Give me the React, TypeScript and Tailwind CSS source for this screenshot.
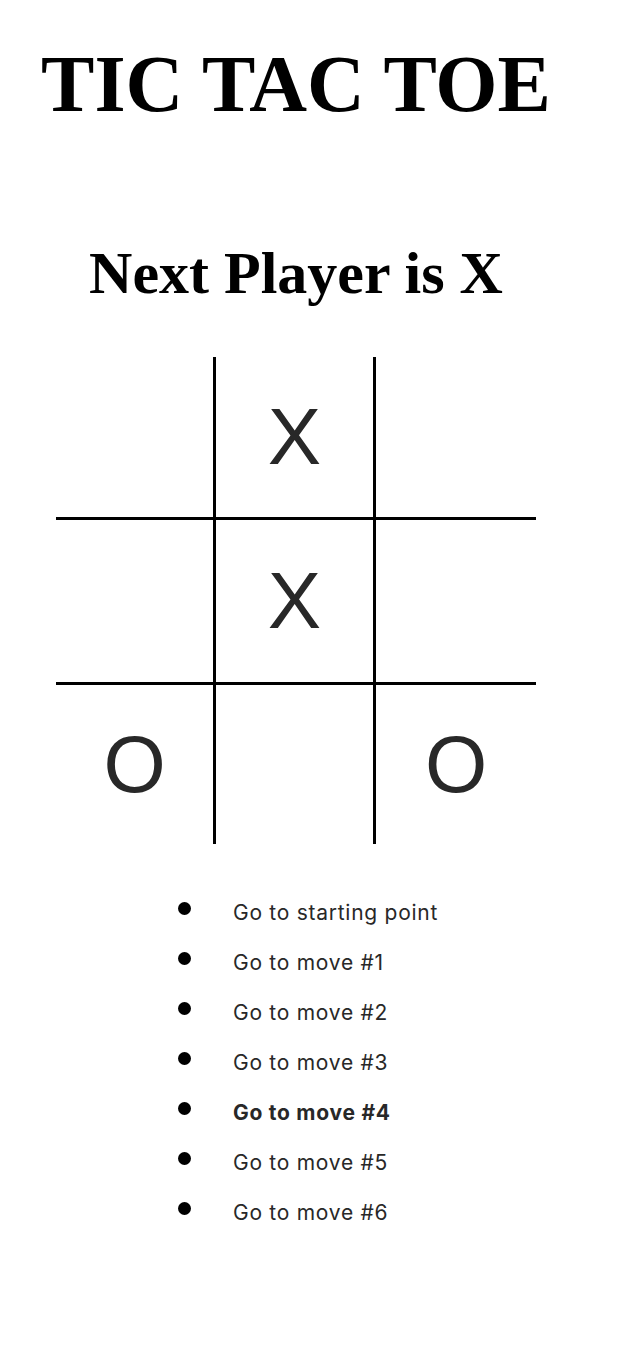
const BOARD: string[] = ["", "X", "", "", "X", "", "O", "", "O"];

const MOVES = [
  "Go to starting point",
  "Go to move #1",
  "Go to move #2",
  "Go to move #3",
  "Go to move #4",
  "Go to move #5",
  "Go to move #6",
];

const CURRENT_MOVE = 4;

// column widths / row heights, the middle ones carry the grid lines
const COL_W = ["w-[157px]", "w-[163px]", "w-[160px]"];
const ROW_H = ["h-[160px]", "h-[168px]", "h-[159px]"];

function Square({ value, col, row }: { value: string; col: number; row: number }) {
  const lines = [
    col === 1 ? "border-x-[3px] border-black" : "",
    row === 1 ? "border-y-[3px] border-black" : "",
  ].join(" ");
  return (
    <button
      type="button"
      className={`${COL_W[col]} ${ROW_H[row]} ${lines} flex items-center justify-center text-[80px] leading-none text-[#282828] font-['Liberation_Sans',Arial,sans-serif]`}
    >
      {value}
    </button>
  );
}

export default function App() {
  return (
    <div className="min-h-screen bg-white">
      <div className="w-[592px] flex flex-col items-center">
        <h1 className="mt-[44px] text-[80px] leading-none font-bold text-black font-['Liberation_Serif','Times_New_Roman',serif]">
          TIC TAC TOE
        </h1>

        <h2 className="mt-[119px] text-[60px] leading-none font-bold text-black font-['Liberation_Serif','Times_New_Roman',serif]">
          Next Player is X
        </h2>

        {/* Board */}
        <div className="mt-[54px] flex flex-col">
          {[0, 1, 2].map((row) => (
            <div key={row} className="flex">
              {[0, 1, 2].map((col) => (
                <Square key={col} value={BOARD[row * 3 + col]} col={col} row={row} />
              ))}
            </div>
          ))}
        </div>

        {/* History */}
        <ul className="self-start ml-[178px] mt-[44px] flex flex-col">
          {MOVES.map((label, i) => (
            <li key={label} className="h-[50px] flex items-center">
              <span className="w-[13px] h-[13px] rounded-full bg-black mb-[10px]" />
              <button
                type="button"
                className={`ml-[42px] text-[21px] tracking-[0.035em] text-[#282828] font-['Inter',sans-serif] ${
                  i === CURRENT_MOVE ? "font-bold" : "font-normal"
                }`}
              >
                {label}
              </button>
            </li>
          ))}
        </ul>
      </div>
    </div>
  );
}
